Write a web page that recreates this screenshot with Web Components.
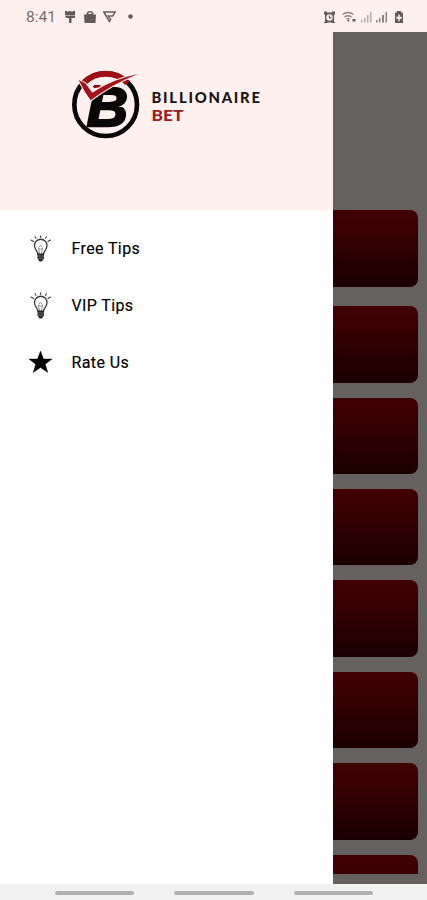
<!DOCTYPE html>
<html lang="en">
<head>
<meta charset="utf-8">
<title>Billionaire Bet</title>
<style>
html, body { margin: 0; height: 100%; overflow: hidden; }
body { font-family: Roboto, sans-serif; background: #fff0f0; }
</style>
</head>
<body>
<app-screen>
  <status-bar slot="status" time="8:41"></status-bar>
  <tip-feed slot="feed"></tip-feed>
  <nav-drawer slot="drawer">
    <brand-logo slot="header"></brand-logo>
    <drawer-item icon="bulb">Free Tips</drawer-item>
    <drawer-item icon="bulb">VIP Tips</drawer-item>
    <drawer-item icon="star">Rate Us</drawer-item>
  </nav-drawer>
  <gesture-bar slot="nav"></gesture-bar>
</app-screen>

<script>
class AppScreen extends HTMLElement {
  constructor() {
    super();
    this._root = this.attachShadow({mode: 'open'});
  }

  connectedCallback() {
    this._root.innerHTML =
`
<style>
:host {
  display: grid;
  grid-template-columns: 333px 1fr;
  grid-template-rows: 32px 178px 1fr 16px;
  height: 100vh;
  overflow: hidden;
}
slot[name="status"]::slotted(*) { grid-area: 1 / 1 / 2 / 3; }
slot[name="drawer"]::slotted(*) { grid-area: 2 / 1 / 4 / 2; }
slot[name="feed"]::slotted(*) { grid-area: 2 / 2 / 4 / 3; }
slot[name="nav"]::slotted(*) { grid-area: 4 / 1 / 5 / 3; }
</style>
<slot name="status"></slot>
<slot name="feed"></slot>
<slot name="drawer"></slot>
<slot name="nav"></slot>
`;
  }
}

class StatusBar extends HTMLElement {
  constructor() {
    super();
    this._root = this.attachShadow({mode: 'open'});
  }

  connectedCallback() {
    this._root.innerHTML =
`
<style>
:host {
  display: flex;
  justify-content: space-between;
  align-items: center;
  box-sizing: border-box;
  padding: 2px 22px 0 26px;
  background: #fff0f0;
  color: #625a5a;
}
.side { display: flex; align-items: center; }
.time { width: 38px; font-size: 15.5px; line-height: 20px; color: #796f6f; }
svg { display: block; }
</style>
<div class="side">
  <span class="time">${this.getAttribute('time')}</span>
  <svg width="72" height="14" viewBox="0 0 72 14" fill="currentColor">
    <path d="M1 1h2l1 1 1-1h2l1 1 1-1h2v4H1zM1 5.500h10V8H7.500v5H5V8H2z"/>
    <path d="M20 4.500h2.500a3.500 3.500 0 0 1 7 0H32l-.5 8.500h-11zM24.300 4h3.400a1.700 1.700 0 0 0-3.400 0z" fill-rule="evenodd"/>
    <path d="M39 2h12L48.800 6h-3M39.800 2l5.700 9.500L47 8.500M44 5l2 3.500" fill="none" stroke="currentColor" stroke-width="1.500"/>
    <circle cx="66.500" cy="6.500" r="2.300"/>
  </svg>
</div>
<div class="side">
  <svg width="82" height="14" viewBox="0 0 82 14" fill="currentColor">
    <path d="M1 1.500h3v1h5v-1h3v3h-1V12h1v1H9l-1-.5H5L4 13H1v-1h1V4.500H1z"/>
    <circle cx="6.500" cy="7.500" r="3.200" fill="#fff0f0"/>
    <path d="M6.500 5.500v2.300h2" fill="none" stroke="currentColor" stroke-width="1.200"/>
    <g fill="none" stroke="#8d8383" stroke-width="1.400">
      <path d="M19.500 4.500q5.500-4 11 0M21.500 7q3.500-2.500 7 0M23.500 9.200q1.500-1 3 0"/>
    </g>
    <path d="M24 10h2.500l-1 2zM29.500 9h3v2.500h-3z"/>
    <g fill="#b3a9a9"><path d="M38 10h1.500v2.500H38zM41 8h1.500v4.500H41zM44 5h1.500v7.500H44zM47 2h1.500v10.500H47z"/></g>
    <g fill="#8b8181"><path d="M53 10h1.500v2.500H53zM56 8h1.500v4.500H56zM59 5h2v7.500H59zM62.500 2H64v10.500h-1.500z"/></g>
    <path fill-rule="evenodd" d="M74 1h4v1.500h2v10.500h-8V2.500h2zM75.300 4.500v2.300h-2v2h2v2.400h1.500V8.800h2v-2h-2V4.500z"/>
  </svg>
</div>
`;
  }
}

class BrandLogo extends HTMLElement {
  constructor() {
    super();
    this._root = this.attachShadow({mode: 'open'});
  }

  connectedCallback() {
    this._root.innerHTML =
`
<style>
:host { display: flex; align-items: center; }
svg { display: block; }
</style>
<svg width="90" height="90" viewBox="0 0 270 270">
  <circle cx="137" cy="134" r="94" fill="none" stroke="#090707" stroke-width="14"/>
  <text x="80" y="199" font-family="'Liberation Sans', sans-serif" font-size="168" font-weight="700" font-style="italic" fill="#090707" stroke="#090707" stroke-width="7" textLength="124" lengthAdjust="spacingAndGlyphs">B</text>
  <!-- clears the corner of the letter above the tick -->
  <path d="M78 72L97 102L136 74L128 74L104 70Z" fill="#fff0f0" stroke="#fff0f0" stroke-width="6"/>
  <path d="M71 69A92.500 92.500 0 0 1 203 69" fill="none" stroke="#a00e16" stroke-width="18"/>
  <path d="M56 60L76 70L97 98Q155 58 234 42Q157 72 92 121L75 96Z" fill="none" stroke="#fff0f0" stroke-width="6" stroke-linejoin="round"/>
  <path d="M56 60L76 70L97 98Q155 58 234 42Q157 72 92 121L75 96Z" fill="#a5121b"/>
  <path d="M98 79q6-7 14-4l12 1-6 6-15 3z" fill="#8b0d13"/>
</svg>
<svg width="120" height="90" viewBox="0 0 120 90" font-family="Lato, sans-serif" font-weight="900" font-size="14.800">
  <text x="1.500" y="43" fill="#171313" textLength="108.500">BILLIONAIRE</text>
  <text x="1.500" y="61.300" fill="#9d1b24" textLength="32" lengthAdjust="spacingAndGlyphs">BET</text>
</svg>
`;
  }
}

class NavDrawer extends HTMLElement {
  constructor() {
    super();
    this._root = this.attachShadow({mode: 'open'});
  }

  connectedCallback() {
    this._root.innerHTML =
`
<style>
:host {
  display: flex;
  flex-direction: column;
  background: #fff;
}
header {
  box-sizing: border-box;
  height: 178px;
  padding: 28px 0 0 60px;
  background: #fff0f0;
}
nav { padding-top: 10px; }
</style>
<header><slot name="header"></slot></header>
<nav><slot></slot></nav>
`;
  }
}

const ITEM_ICONS = {
  bulb: `
<g fill="none" stroke="#3c3c3c" stroke-width="1.100" stroke-linecap="round">
  <path d="M10 19.500C10 16 6.500 15 6.500 10.500a6 6 0 0 1 12.500 0C19 15 15.500 16 15.500 19.500" stroke-width="1.300"/>
  <path d="M11.500 19l-1-6 2 1.500 2-1.500-1 6M11 12q1.500-3 3 0" stroke="#777" stroke-width=".8"/>
  <path d="M12.700.8v1.700M7 1.800l1 1.500M18.500 1.800l-1 1.500M3 5l2.500 1.500M22.500 5L20 6.500"/>
</g>
<path d="M9.500 18.500h6.400v5l-2 3h-2.400l-2-3z" fill="#292929"/>
<path d="M9.500 21h6M10 23.300h5" stroke="#aaa" stroke-width=".5"/>`,
  star: `<path d="M12.500 2l3 8H24l-6.700 5.200 2.500 8.300-7.300-4.900-7.300 4.900 2.500-8.300L1 10h8.500z" fill="#000" stroke="#000" stroke-width=".4"/>`
};

class DrawerItem extends HTMLElement {
  constructor() {
    super();
    this._root = this.attachShadow({mode: 'open'});
  }

  connectedCallback() {
    this._root.innerHTML =
`
<style>
:host {
  display: flex;
  align-items: center;
  gap: 18.5px;
  height: 57px;
  padding-left: 28px;
  box-sizing: border-box;
  font-size: 16px;
  letter-spacing: .38px;
  color: #000;
  -webkit-text-stroke: .15px #000;
}
svg { display: block; }
</style>
<svg width="25" height="27" viewBox="0 0 25 27">${ITEM_ICONS[this.getAttribute('icon')]}</svg>
<span><slot></slot></span>
`;
  }
}

// cards behind the drawer, already dimmed by the scrim
class TipFeed extends HTMLElement {
  constructor() {
    super();
    this._root = this.attachShadow({mode: 'open'});
  }

  connectedCallback() {
    this._root.innerHTML =
`
<style>
:host {
  display: block;
  box-sizing: border-box;
  padding: 178px 9px 10px 0;
  background: #656160;
  overflow: hidden;
}
.list {
  display: flex;
  flex-direction: column;
  gap: 15px;
  height: 100%;
  overflow: hidden;
}
.card {
  flex: none;
  height: 76.4px;
  border-radius: 0 8px 8px 0;
  background: linear-gradient(#400004, #380003 30%, #1c0001 95%);
}
.card:first-child { height: 77px; margin-bottom: 4.2px; }
</style>
<div class="list">${'<div class="card"></div>'.repeat(8)}</div>
`;
  }
}

class GestureBar extends HTMLElement {
  constructor() {
    super();
    this._root = this.attachShadow({mode: 'open'});
  }

  connectedCallback() {
    this._root.innerHTML =
`
<style>
:host {
  display: flex;
  justify-content: center;
  align-items: center;
  gap: 40px;
  padding: 2px 0 0 1px;
  box-sizing: border-box;
  background: #f1f1f1;
}
i { width: 79.5px; height: 3.5px; border-radius: 2px; background: #b0b0b0; }
</style>
<i></i><i></i><i></i>
`;
  }
}

window.customElements.define('app-screen', AppScreen);
window.customElements.define('status-bar', StatusBar);
window.customElements.define('brand-logo', BrandLogo);
window.customElements.define('nav-drawer', NavDrawer);
window.customElements.define('drawer-item', DrawerItem);
window.customElements.define('tip-feed', TipFeed);
window.customElements.define('gesture-bar', GestureBar);
</script>
</body>
</html>
